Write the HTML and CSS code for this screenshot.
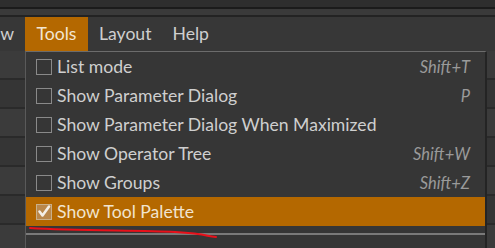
FILE: index.html
```html
<!DOCTYPE html>
<html>
<head>
<meta charset="utf-8">
<link rel="stylesheet" href="styles.css">
</head>
<body>
<div class="app">
  <div class="topbars">
    <div class="tb tb1"></div>
    <div class="tb tb2"></div>
    <div class="tb tb3"></div>
    <div class="tb tb4"></div>
  </div>
  <div class="menubar">
    <span class="mb-item mb-cut">w</span>
    <span class="mb-item mb-active">Tools</span>
    <span class="mb-item">Layout</span>
    <span class="mb-item">Help</span>
  </div>
  <div class="content">
    <div class="row r-a"></div>
    <div class="row r-b"></div>
    <div class="row r-a"></div>
    <div class="row r-b"></div>
    <div class="row r-a"></div>
    <div class="row r-b"></div>
    <div class="row r-a"></div>
  </div>

  <div class="menu">
    <div class="mi"><span class="cb"></span><span class="lbl">List mode</span><span class="sc">Shift+T</span></div>
    <div class="mi"><span class="cb"></span><span class="lbl">Show Parameter Dialog</span><span class="sc">P</span></div>
    <div class="mi"><span class="cb"></span><span class="lbl">Show Parameter Dialog When Maximized</span><span class="sc"></span></div>
    <div class="mi"><span class="cb"></span><span class="lbl">Show Operator Tree</span><span class="sc">Shift+W</span></div>
    <div class="mi"><span class="cb"></span><span class="lbl">Show Groups</span><span class="sc">Shift+Z</span></div>
    <div class="mi mi-hl"><span class="cb cb-on"><svg viewBox="0 0 16 16" width="16" height="16"><path d="M3.5 8.5 L6.5 12.5 L13 3.5" fill="none" stroke="#f4efe6" stroke-width="2.6" stroke-linejoin="round" stroke-linecap="round"/></svg></span><span class="lbl">Show Tool Palette</span><span class="sc"></span></div>
    <div class="sep"></div>
  </div>

  <svg class="annot" width="495" height="248" viewBox="0 0 495 248">
    <path d="M30 228 C 80 231, 140 230, 175 232 S 205 236.5, 216 237" fill="none" stroke="#e8101a" stroke-width="2" stroke-linecap="round"/>
  </svg>
</div>
</body>
</html>
```

FILE: styles.css
```css
html, body {
  margin: 0;
  padding: 0;
}
body {
  background: #333333;
  font-family: "Lato", "Noto Sans", sans-serif;
  width: 495px;
  height: 248px;
  overflow: hidden;
}
.app {
  position: relative;
  width: 495px;
  height: 248px;
  overflow: hidden;
}
.topbars {
  display: flex;
  flex-direction: column;
}
.tb1 { height: 7px; background: #2e2e2e; }
.tb2 { height: 2px; background: #1b1b1b; }
.tb3 { height: 6px; background: #3a3a3a; }
.tb4 { height: 2px; background: #232323; }

.menubar {
  height: 34px;
  background: #373737;
  display: flex;
  align-items: stretch;
  font-size: 17.6px;
  color: #cfcfcf;
}
.mb-item {
  display: flex;
  align-items: center;
  padding: 0 10px 2px 11px;
}
.mb-cut {
  width: 25px;
  box-sizing: border-box;
  padding: 0 11px 2px 0;
  justify-content: flex-end;
  overflow: hidden;
}
.mb-active {
  background: #b46800;
  color: #f3e6d2;
  width: 63px;
  box-sizing: border-box;
  justify-content: center;
  padding: 0 0 2px 0;
}
.content {
  display: flex;
  flex-direction: column;
}
.row {
  height: 27px;
  border-bottom: 2px solid #2a2a2a;
}
.r-a { background: #3b3b3b; }
.r-b { background: #353535; }

.menu {
  position: absolute;
  left: 25px;
  top: 51px;
  width: 462px;
  height: 197px;
  background: #363636;
  border-top: 1px solid #6c6c6c;
  border-left: 1px solid #5a5a5a;
  border-right: 2px solid #242424;
  box-sizing: border-box;
  display: flex;
  flex-direction: column;
  font-size: 17.6px;
  color: #cfcfcf;
}
.mi {
  height: 29px;
  display: flex;
  align-items: center;
  padding: 0 15px 0 10px;
  flex: none;
}
.mi-hl {
  background: #b46800;
  color: #f1e4cf;
}
.cb {
  width: 16px;
  height: 16px;
  box-sizing: border-box;
  border: 1.5px solid #8a8a8a;
  flex: none;
  margin-right: 5px;
  position: relative;
}
.cb-on {
  border-color: #c9b08a;
  background: #b9874a;
}
.cb-on svg {
  position: absolute;
  left: -1.5px;
  top: -1.5px;
}
.lbl {
  flex: 1;
  white-space: nowrap;
}
.sc {
  font-style: italic;
  font-size: 16.5px;
  color: #9a9a9a;
}
.sep {
  margin-top: 7px;
  height: 2px;
  background: #7a7a7a;
  flex: none;
}
.annot {
  position: absolute;
  left: 0;
  top: 0;
  pointer-events: none;
}
```
